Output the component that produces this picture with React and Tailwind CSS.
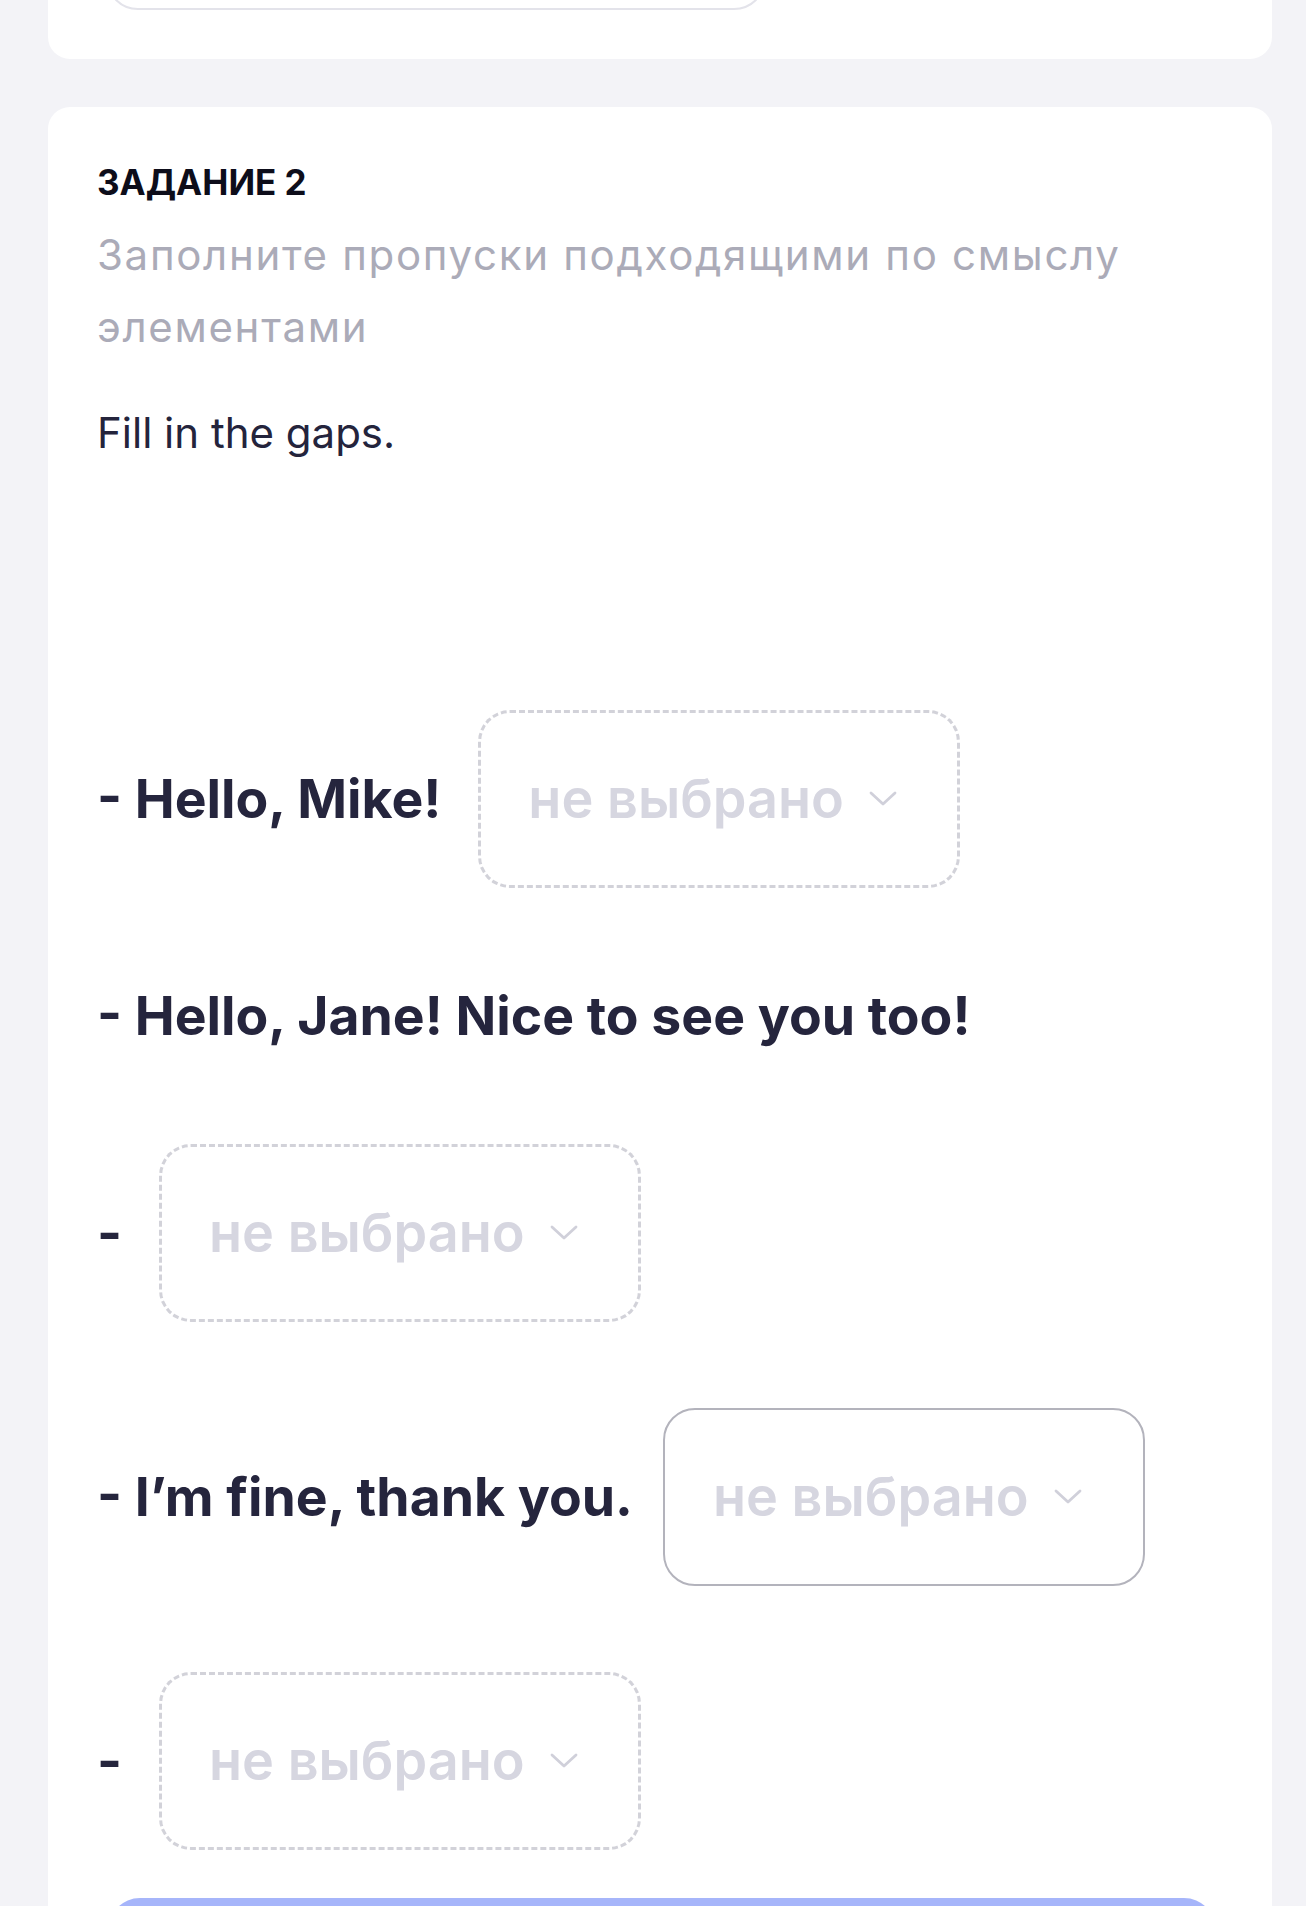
import React from "react";

function Chevron() {
  return (
    <svg width="28" height="16" viewBox="0 0 28 16" fill="none" className="shrink-0">
      <polyline points="2,2 14,13 26,2" stroke="#d0d0da" strokeWidth="2.8" strokeLinecap="round" strokeLinejoin="round" />
    </svg>
  );
}

function Select({ active }) {
  return (
    <div
      className={
        active
          ? "flex h-[178px] w-[482px] shrink-0 items-center gap-[25px] rounded-[32px] border-2 border-solid border-[#b3b3bc] bg-white pl-[48px] pr-[62px]"
          : "flex h-[178px] w-[482px] shrink-0 items-center gap-[25px] rounded-[32px] border-[3px] border-dashed border-[#d2d2d9] bg-white pl-[47px] pr-[61px]"
      }
    >
      <span className="whitespace-nowrap text-[54px] font-semibold leading-none text-[#d6d6e0]">не выбрано</span>
      <Chevron />
    </div>
  );
}

export default function App() {
  return (
    <div className="min-h-[1906px] bg-[#f3f3f7] pb-[40px] font-['Inter','Noto_Sans',sans-serif]">
      <div className="ml-[48px] h-[59px] w-[1224px] overflow-hidden rounded-b-[22px] bg-white pl-[58px]">
        <div className="-mt-[70px] h-[80px] w-[660px] rounded-[32px] border-2 border-[#e3e3ea]" />
      </div>

      <div className="ml-[48px] mt-[48px] w-[1224px] rounded-t-[22px] bg-white pt-[55px]">
        <div className="px-[49px]">
          <h2 className="text-[35px] font-bold leading-[40px] text-[#0d0d1a]">ЗАДАНИЕ 2</h2>
          <p className="mt-[17px] text-[42px] leading-[72px] tracking-[0.04em] text-[#ababb8]">
            Заполните пропуски подходящими по смыслу элементами
          </p>
          <p className="mt-[40px] text-[42px] leading-[60px] text-[#24243c]">Fill in the gaps.</p>

          <div className="mt-[247px] flex flex-col gap-[86px] text-[53.5px] font-bold text-[#25253d]">
            <div className="flex items-center gap-[37px]">
              <span className="whitespace-nowrap">- Hello, Mike!</span>
              <Select />
            </div>
            <div className="flex h-[84px] items-center">
              <span className="whitespace-nowrap">- Hello, Jane! Nice to see you too!</span>
            </div>
            <div className="flex items-center gap-[37px]">
              <span>-</span>
              <Select />
            </div>
            <div className="flex items-center gap-[30px]">
              <span className="whitespace-nowrap">- I’m fine, thank you.</span>
              <Select active />
            </div>
            <div className="flex items-center gap-[37px]">
              <span>-</span>
              <Select />
            </div>
          </div>
        </div>

        <div className="ml-[60px] mr-[56px] mt-[48px] flex h-[110px] items-center justify-center rounded-[32px] bg-[#a6b5fa]" />
      </div>
    </div>
  );
}
